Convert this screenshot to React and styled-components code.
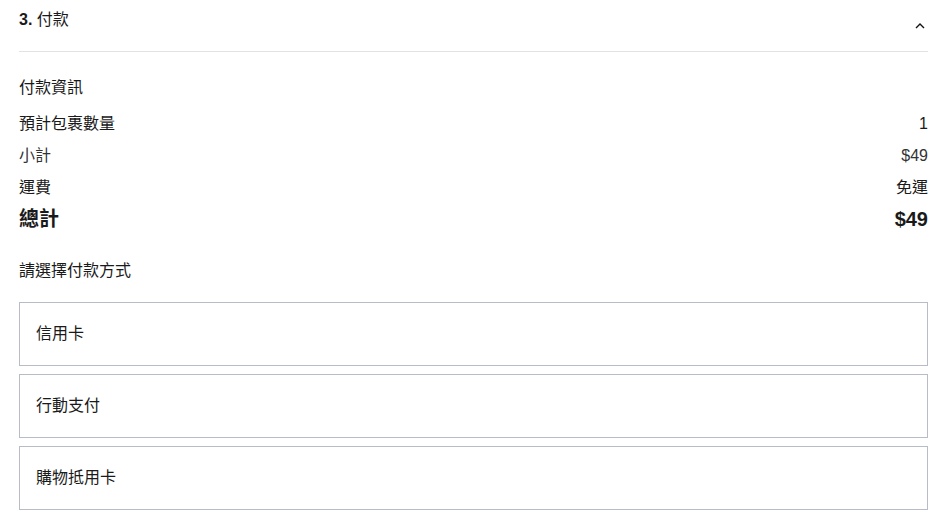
import React from "react";
import styled, { createGlobalStyle } from "styled-components";

const Global = createGlobalStyle`
  html, body { margin: 0; padding: 0; background: #fff; }
  body {
    font-family: "Liberation Sans", "Noto Sans CJK TC", Arial, sans-serif;
    color: #1a1a1a;
    -webkit-font-smoothing: antialiased;
  }
`;

const Page = styled.div`
  padding: 0 23px 0 19px;
`;

const Header = styled.div`
  display: flex;
  justify-content: space-between;
  align-items: flex-start;
  height: 51px;
  border-bottom: 1px solid #e2e2e2;
`;

const StepTitle = styled.div`
  margin-top: 8px;
  font-size: 16px;
  line-height: 24px;
  b { font-weight: 700; }
`;

const Toggle = styled.button`
  margin-top: 22px;
  margin-right: 3px;
  padding: 0;
  border: 0;
  background: none;
  width: 10px;
  height: 8px;
  display: flex;
  align-items: center;
  justify-content: center;
  cursor: pointer;
`;

const Section = styled.div`
  padding-top: ${(p) => p.$pt}px;
`;

const SectionTitle = styled.div`
  font-size: 16px;
  line-height: 24px;
  margin-bottom: ${(p) => p.$mb || 0}px;
`;

const Rows = styled.div`
  display: flex;
  flex-direction: column;
  gap: 8px;
`;

const Row = styled.div`
  display: flex;
  justify-content: space-between;
  align-items: center;
  font-size: ${(p) => (p.$total ? 20 : 16)}px;
  font-weight: ${(p) => (p.$total ? 700 : 400)};
  line-height: ${(p) => (p.$total ? 22 : 24)}px;
  color: ${(p) => (p.$muted ? "#333" : "#1a1a1a")};
`;

const MethodList = styled.div`
  display: flex;
  flex-direction: column;
  gap: 8px;
`;

const Method = styled.div`
  height: 62px;
  border: 1px solid #b8bcc6;
  display: flex;
  align-items: center;
  padding-left: 16px;
  font-size: 16px;
  line-height: 24px;
`;

export default function App() {
  return (
    <>
      <Global />
      <Page>
        <Header>
          <StepTitle>
            <b>3.</b> 付款
          </StepTitle>
          <Toggle aria-label="收合">
            <svg width="10" height="6" viewBox="0 0 10 6">
              <polyline
                points="1,5 5,1 9,5"
                fill="none"
                stroke="#111"
                strokeWidth="1.4"
              />
            </svg>
          </Toggle>
        </Header>
        <Section $pt={24}>
          <SectionTitle $mb={12}>付款資訊</SectionTitle>
          <Rows>
            <Row>
              <span>預計包裹數量</span>
              <span>1</span>
            </Row>
            <Row $muted>
              <span>小計</span>
              <span>$49</span>
            </Row>
            <Row>
              <span>運費</span>
              <span>免運</span>
            </Row>
            <Row $total>
              <span>總計</span>
              <span>$49</span>
            </Row>
          </Rows>
        </Section>
        <Section $pt={29}>
          <SectionTitle $mb={19}>請選擇付款方式</SectionTitle>
          <MethodList>
            <Method>信用卡</Method>
            <Method>行動支付</Method>
            <Method>購物抵用卡</Method>
          </MethodList>
        </Section>
      </Page>
    </>
  );
}
